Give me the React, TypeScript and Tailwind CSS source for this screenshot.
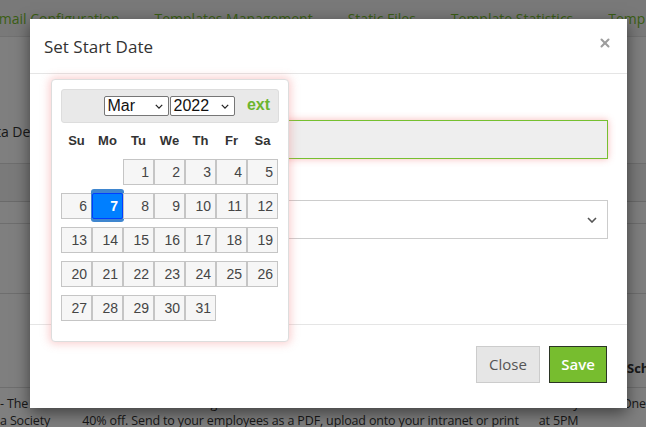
import { X } from 'lucide-react';

const weekdays = ['Su', 'Mo', 'Tu', 'We', 'Th', 'Fr', 'Sa'];

// March 2022 starts on a Tuesday
const days: (number | null)[] = [null, null, ...Array.from({ length: 31 }, (_, i) => i + 1)];

function Chevron({ className }: { className?: string }) {
  return (
    <svg viewBox="0 0 10 6" className={className} fill="none" stroke="currentColor" strokeWidth="1.6">
      <path d="M1 1l4 4 4-4" />
    </svg>
  );
}

function FakeSelect({ value }: { value: string }) {
  return (
    <div className="w-[65px] h-[20px] bg-white border border-[#767676] rounded-[2px] flex items-center justify-between pl-[3px] pr-[5px]">
      <span className="text-[16px] leading-none text-[#111]">{value}</span>
      <Chevron className="w-[8px] h-[5px] text-[#222]" />
    </div>
  );
}

function Calendar() {
  return (
    <div className="absolute left-[21px] top-[5px] w-[238px] h-[263px] bg-white border border-[#dddddd] rounded-[4px] p-[9px] shadow-[0_0_8px_2px_rgba(240,120,120,0.35)] font-['Liberation_Sans',Arial,sans-serif]">
      {/* header */}
      <div className="relative h-[34px] bg-[#e9e9e9] border border-[#dddddd] rounded-[3px] flex items-center justify-center">
        <div className="-ml-[2px] flex gap-[1px]">
          <FakeSelect value="Mar" />
          <FakeSelect value="2022" />
        </div>
        <span className="absolute right-[8px] top-[6px] text-[16px] leading-[18px] font-bold text-[#6cb52d]">ext</span>
      </div>

      {/* weekdays */}
      <div className="grid grid-cols-[repeat(7,31px)] h-[36px] items-center">
        {weekdays.map((d) => (
          <div key={d} className="text-center text-[13px] font-bold text-[#333]">
            {d}
          </div>
        ))}
      </div>

      {/* days */}
      <div className="grid grid-cols-[repeat(7,31px)] gap-y-[8px]">
        {days.map((d, i) =>
          d === null ? (
            <div key={`e${i}`} />
          ) : d === 7 ? (
            <div
              key={d}
              className="h-[26px] border border-[#003eff] bg-[#007fff] rounded-[2px] text-right pr-[4px] text-[14px] leading-[24px] font-bold text-white shadow-[0_0_0_1px_#3f86cf,0_-3px_0_1px_#3f86cf,0_2px_0_1px_#3f86cf]"
            >
              {d}
            </div>
          ) : (
            <div
              key={d}
              className="h-[26px] border border-[#c5c5c5] bg-[#f6f6f6] text-right pr-[4px] text-[14px] leading-[24px] text-[#454545]"
            >
              {d}
            </div>
          )
        )}
      </div>
    </div>
  );
}

function Modal() {
  return (
    <div className="absolute left-[30px] top-[19px] w-[597px] bg-white shadow-[0_5px_15px_rgba(0,0,0,0.5)] font-['Open_Sans',sans-serif]">
      {/* Header */}
      <div className="h-[55px] border-b border-[#e5e5e5] px-[14px] flex items-center justify-between">
        <h4 className="text-[17px] text-[#333] leading-none pt-[1px]">Set Start Date</h4>
        <X className="w-[14px] h-[14px] text-[#9d9d9d] mr-[1px] -mt-[6px]" strokeWidth={3.5} />
      </div>

      {/* Body */}
      <div className="relative h-[250px] px-[15px] pt-[46px]">
        <div className="flex items-center gap-[15px]">
          <label className="w-[150px] text-right text-[14px] font-bold text-[#333]">Start Date</label>
          <div className="w-[398px] h-[39px] bg-[#eeeeee] border border-[#76c030] shadow-[0_0_7px_rgba(240,100,100,0.45)]" />
        </div>
        <div className="flex items-center gap-[15px] mt-[41px]">
          <label className="w-[150px] text-right text-[14px] font-bold text-[#333]">Frequency</label>
          <div className="w-[398px] h-[39px] bg-white border border-[#cccccc] flex items-center justify-end pr-[10px]">
            <Chevron className="w-[10px] h-[6px] text-[#555]" />
          </div>
        </div>
        <Calendar />
      </div>

      {/* Footer */}
      <div className="h-[84px] border-t border-[#e5e5e5] flex justify-end items-start pt-[21px] pr-[20px] gap-[9px]">
        <button className="w-[64px] h-[37px] bg-[#e6e6e6] border border-[#cccccc] text-[15px] text-[#555]">
          Close
        </button>
        <button className="w-[58px] h-[37px] bg-[#77bd2f] border border-[#2b3524] text-[15px] font-semibold text-white">
          Save
        </button>
      </div>
    </div>
  );
}

function Page() {
  return (
    <div className="flex flex-col font-['Open_Sans',sans-serif] text-[#333]">
      {/* top navigation */}
      <nav className="h-[37px] bg-[#f3f3f3] border-b border-[#e2e2e2] flex items-center gap-[35px] -ml-[9px] text-[14px] text-[#76bd2d] whitespace-nowrap">
        <span>Email Configuration</span>
        <span>Templates Management</span>
        <span>Static Files</span>
        <span>Template Statistics</span>
        <span>Templates</span>
      </nav>

      <div className="mt-[85px] -ml-[22px] text-[14px] leading-[20px]">Data Details</div>

      {/* first table */}
      <div className="mt-[21px] border-t border-[#dddddd]">
        <div className="h-[38px] bg-[#f5f5f5] border-b border-[#d5d5d5]" />
        <div className="h-[22px] border-b border-[#dddddd]" />
        <div className="h-[70px] border-b border-[#dddddd]" />
      </div>

      {/* second table */}
      <div className="mt-[56px]">
        <div className="h-[38px] border-b border-[#dddddd] flex items-center text-[13px] font-bold">
          <span className="ml-[627px]">Schedule</span>
        </div>
        <div className="flex text-[12.5px] leading-[17px] tracking-[-0.15px] pt-[7px] whitespace-nowrap">
          <div className="w-[83px]">
            <div>- The</div>
            <div>a Society</div>
          </div>
          <div className="w-[460px]">
            <div>Print this voucher and get</div>
            <div>40% off. Send to your employees as a PDF, upload onto your intranet or print</div>
          </div>
          <div className="w-[84px]">
            <div>Weekly</div>
            <div>at 5PM</div>
          </div>
          <div>
            <div>One</div>
          </div>
        </div>
      </div>
    </div>
  );
}

export default function App() {
  return (
    <div className="relative w-[646px] h-[427px] overflow-hidden bg-white">
      <Page />
      <div className="absolute inset-0 bg-black/50" />
      <Modal />
    </div>
  );
}
